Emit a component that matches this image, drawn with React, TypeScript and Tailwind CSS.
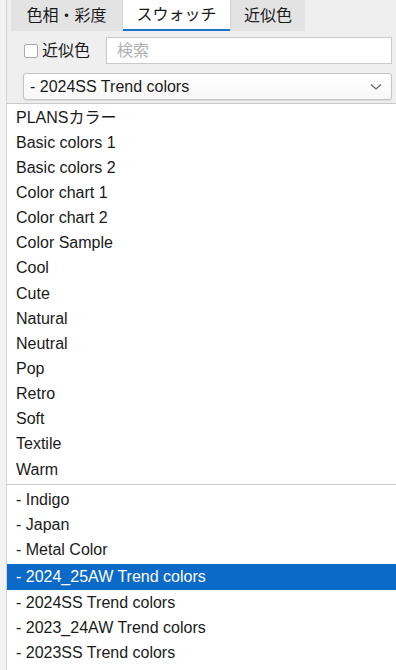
import React from 'react';

const groupA = [
  'PLANSカラー',
  'Basic colors 1',
  'Basic colors 2',
  'Color chart 1',
  'Color chart 2',
  'Color Sample',
  'Cool',
  'Cute',
  'Natural',
  'Neutral',
  'Pop',
  'Retro',
  'Soft',
  'Textile',
  'Warm',
];

const groupB = [
  '- Indigo',
  '- Japan',
  '- Metal Color',
  '- 2024_25AW Trend colors',
  '- 2024SS Trend colors',
  '- 2023_24AW Trend colors',
  '- 2023SS Trend colors',
];

const font = { fontFamily: '"Liberation Sans", "Noto Sans CJK JP", Arial, sans-serif' };

const App = () => {
  const selected = '- 2024_25AW Trend colors';

  return (
    <div className="w-[396px] h-[670px] overflow-hidden bg-[#efefef] text-[#1a1a1a] flex" style={font}>
      <div className="w-[7px] shrink-0 bg-[#f2f2f2] border-r border-[#d2d2d2]" />
      <div className="flex-1 flex flex-col min-w-0">
        {/* tabs */}
        <div className="h-[31px] flex items-stretch pl-[4px] text-[16px]">
          <div className="w-[111px] bg-[#e3e3e3] flex items-center justify-center">色相・彩度</div>
          <div className="w-[1px] bg-[#d6d6d6]" />
          <div className="w-[107px] bg-white flex items-center justify-center border-b-2 border-[#1a73c9]">スウォッチ</div>
          <div className="w-[1px] bg-[#d6d6d6]" />
          <div className="w-[74px] bg-[#e3e3e3] flex items-center justify-center">近似色</div>
        </div>

        {/* search row */}
        <div className="h-[37px] flex items-center pl-[17px] pr-[4px] pt-[2px]">
          <div className="w-[14px] h-[14px] bg-white border border-[#a9a9a9] rounded-[2px]" />
          <span className="ml-[4px] text-[16px]">近似色</span>
          <div className="ml-[16px] flex-1 h-[27px] bg-white border border-[#cacaca] flex items-center pl-[10px] text-[16px] text-[#b0b0b0]">
            検索
          </div>
        </div>

        {/* select */}
        <div className="h-[35px] flex items-start pl-[16px] pr-[4px] pt-[5px]">
          <div className="flex-1 h-[27px] bg-gradient-to-b from-white to-[#f7f7f7] border border-[#c4c4c4] rounded-[3px] flex items-center justify-between pl-[6px] pr-[9px] text-[16px] shadow-[0_1px_1px_rgba(0,0,0,0.08)]">
            <span>- 2024SS Trend colors</span>
            <svg width="12" height="8" viewBox="0 0 12 8" fill="none" stroke="#666" strokeWidth="1.3">
              <path d="M1 1.5 L6 6 L11 1.5" />
            </svg>
          </div>
        </div>

        {/* dropdown list */}
        <div className="flex-1 bg-white border-t border-[#c9c9c9] text-[16px] pt-[1px]">
          {groupA.map((item) => (
            <div key={item} className="h-[25.15px] flex items-center pl-[9px]">
              {item}
            </div>
          ))}
          <div className="h-[5px] flex items-center">
            <div className="w-full h-[1px] bg-[#cdcdcd]" />
          </div>
          {groupB.map((item) => (
            <div
              key={item}
              className={
                item === selected
                  ? 'h-[26px] mt-[2px] flex items-center pl-[9px] bg-[#0b69c7] text-white'
                  : 'h-[25px] flex items-center pl-[9px]'
              }
            >
              {item}
            </div>
          ))}
        </div>
      </div>
    </div>
  );
};

export default App;
